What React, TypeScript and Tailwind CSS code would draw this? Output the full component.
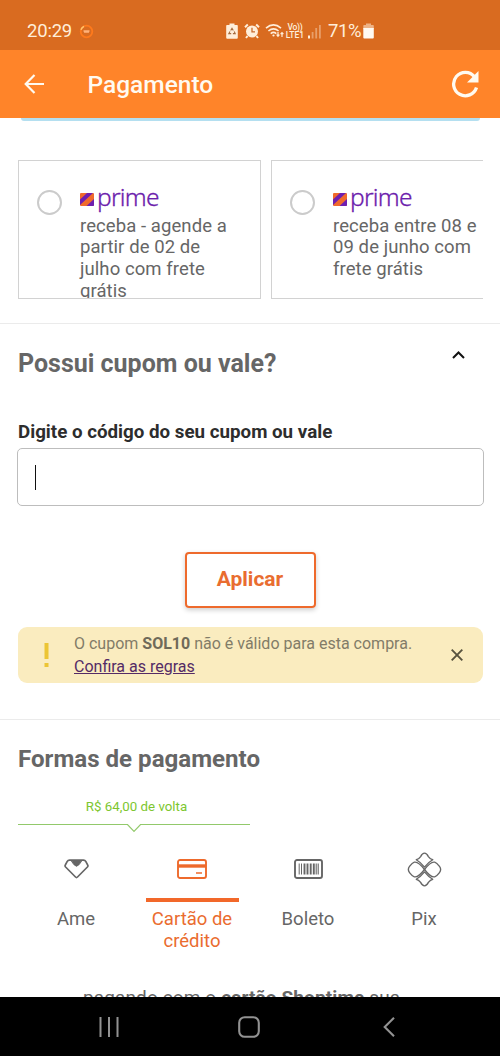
import type { ReactNode } from "react";

function StatusBar() {
  return (
    <div className="flex h-[50px] shrink-0 items-center bg-[#d96b20] pl-[27px] pt-[12px] text-[#ffeeda]">
      <span className="w-[52px] text-[18.5px] leading-[22px] tracking-[-0.2px]">20:29</span>
      <svg width="15" height="15" viewBox="0 0 15 15" fill="none">
        <circle cx="7.5" cy="7.5" r="5.8" stroke="#ff7a1c" strokeWidth="1.8" />
        <path d="M2 5.8A5.8 5.8 0 0 1 5 2.4" stroke="#ffc46b" strokeWidth="1.6" />
        <path d="M4.5 7h6M5 8.200h5" stroke="#ffb27a" strokeWidth="1.3" />
      </svg>
      <svg className="ml-[132px]" width="12" height="16" viewBox="0 0 12 16">
        <path d="M3.5 0.5h5v1.5H11a.8.8 0 0 1 .8.8v12a1 1 0 0 1-1 1H1.2a1 1 0 0 1-1-1v-12A.8.8 0 0 1 1 2h2.500z" fill="currentColor" />
        <path d="M4.700 7.500L6 5.300l1.300 2.200M8.200 8.600l1 2H6.900M5.200 10.600H2.800l1.200-2.200" stroke="#a66a3d" strokeWidth="1.100" fill="none" />
      </svg>
      <svg className="ml-[6px]" width="16" height="16" viewBox="0 0 16 16" fill="none">
        <circle cx="8" cy="8.500" r="6" fill="currentColor" />
        <path d="M1 4.200L3.800 1.500M15 4.200L12.200 1.500M3.500 13L2 15M12.500 13L14 15" stroke="currentColor" strokeWidth="2" />
        <path d="M8 4.800v4h3" stroke="#c96a2c" strokeWidth="1.300" />
      </svg>
      <svg className="ml-[5px]" width="20" height="16" viewBox="0 0 20 16" fill="none" stroke="currentColor">
        <path d="M1 5.200Q8.500-1.300 16 5.200M3.400 8Q8.500 3.700 13.600 8M5.700 10.600Q8.500 8.300 11.300 10.600" strokeWidth="1.600" />
        <circle cx="8.500" cy="12.500" r="1.100" fill="currentColor" stroke="none" />
        <path d="M13 9v4M11.600 11.700L13 13.300l1.400-1.600M17 14v-4M15.600 11.200L17 9.600l1.400 1.600" strokeWidth="1.200" />
      </svg>
      <div className="flex w-[20px] flex-col items-center text-[8.500px] font-medium leading-[8px]">
        <span className="tracking-[-0.3px]">Vo))</span>
        <span>LTE1</span>
      </div>
      <svg className="ml-[3px]" width="13" height="15" viewBox="0 0 13 15" fill="currentColor">
        <rect x="0" y="11.500" width="2" height="3" />
        <rect x="3.700" y="8" width="1.800" height="6.500" opacity=".4" />
        <rect x="7.300" y="4" width="1.800" height="10.500" opacity=".4" />
        <rect x="11" y="1" width="1.800" height="13.500" opacity=".4" />
      </svg>
      <span className="ml-[7px] w-[34px] text-[18.500px] leading-[22px] tracking-[-0.4px]">71%</span>
      <svg className="ml-[1px]" width="11" height="16" viewBox="0 0 11 16" fill="currentColor">
        <path d="M3 0.500h5V2h2a.8.8 0 0 1 .8.8V6H.3V2.800A.8.8 0 0 1 1 2h2z" opacity=".55" />
        <path d="M.3 5h10.500v9.500a1 1 0 0 1-1 1H1.300a1 1 0 0 1-1-1z" fill="#fffaf2" />
      </svg>
    </div>
  );
}

function Header() {
  return (
    <header className="flex h-[68px] shrink-0 items-center bg-[#ff8429] pl-[24px] pr-[21px] text-[#fffaf0]">
      <svg width="21" height="20" viewBox="0 0 21 20" fill="none" stroke="currentColor" strokeWidth="2.200">
        <path d="M20 10H2M10.500 1L1.700 10l8.800 9" />
      </svg>
      <h1 className="ml-[42.500px] flex-1 text-[24.500px] font-medium leading-[28px] pt-[2px]">Pagamento</h1>
      <svg width="28" height="28" viewBox="0 0 28 28" fill="none">
        <path d="M25.500 17.500A11.700 11.700 0 1 1 23.500 6.800" stroke="currentColor" strokeWidth="3.300" />
        <path d="M27.500 1v11.500H16z" fill="currentColor" />
      </svg>
    </header>
  );
}

function PrimeLogo({ id }: { id: string }) {
  return (
    <div className="flex h-[26px] items-center">
      <svg width="14" height="13" viewBox="0 0 14 13">
        <clipPath id={id}>
          <rect width="14" height="13" rx="1" />
        </clipPath>
        <g clipPath={`url(#${id})`}>
          <rect width="14" height="13" fill="#f06a2c" />
          <path d="M7 0h6L0 12V6.500zM14 6v7H6.500z" fill="#6e1fb0" />
        </g>
      </svg>
      <span className="-mt-[4px] ml-[3px] font-['Noto_Sans'] text-[24.500px] font-light leading-[26px] tracking-[-0.750px] text-[#6b20ac] [-webkit-text-stroke:0.3px_#6b20ac]">prime</span>
    </div>
  );
}

function ShippingCard({ id, lines, className }: { id: string; lines: string[]; className: string }) {
  return (
    <div className={`flex h-[139px] shrink-0 overflow-hidden border border-[#d2d2d2] pl-[18px] ${className}`}>
      <span className="mt-[29px] size-[25px] shrink-0 rounded-full border-2 border-[#cbcbcb]" />
      <div className="ml-[18px] mt-[25px] whitespace-nowrap text-[18.500px] leading-[21.700px] tracking-[0.080px] text-[#666]">
        <PrimeLogo id={id} />
        <div className="mt-[3.500px]">
          {lines.map((line) => (
            <div key={line}>{line}</div>
          ))}
        </div>
      </div>
    </div>
  );
}

function CouponAlert() {
  return (
    <div className="ml-[18px] mr-[17px] mt-[19px] flex h-[56px] shrink-0 items-center rounded-[9px] bg-[#faecbf]">
      <svg className="ml-[26px]" width="5" height="25" viewBox="0 0 5 25" fill="#ecc535">
        <rect x="0.500" y="0" width="4" height="16" />
        <rect x="0.500" y="20" width="4" height="4" />
      </svg>
      <div className="-mt-[1px] ml-[25px] flex-1 whitespace-nowrap text-[16px] leading-[23px] text-[#827c68]">
        <p>
          O cupom <b className="text-[#6f6a59]">SOL10</b> não é válido para esta compra.
        </p>
        <a className="text-[#542b66] underline">Confira as regras</a>
      </div>
      <svg className="mr-[20px]" width="12" height="12" viewBox="0 0 12 12" stroke="#57523e" strokeWidth="1.900">
        <path d="M.7.7l10.600 10.600M11.300.7L.7 11.300" />
      </svg>
    </div>
  );
}

function AmeIcon() {
  return (
    <svg width="25" height="20" viewBox="0 0 25 20" fill="none" stroke="#666" strokeWidth="1.700" strokeLinejoin="round">
      <path d="M5.500 1.200h14Q21 1.200 22 2.800L23.700 6Q24.300 7 23.400 8L13.500 18Q12.500 19 11.500 18L1.600 8Q.7 7 1.300 6L3 2.800Q4 1.200 5.500 1.200z" />
      <path d="M7.500 1.500h10L15.200 5.500l-2.700 1.800-2.700-1.800z" fill="#666" stroke="none" />
      <path d="M7 1.500l2.800 4 2.700 1.800 2.700-1.800 2.800-4" strokeWidth="1" />
    </svg>
  );
}

function CardIcon() {
  return (
    <svg width="30" height="20" viewBox="0 0 30 20" fill="none" stroke="#ee6a2c">
      <rect x="1" y="1" width="28" height="18" rx="2" strokeWidth="1.900" />
      <path d="M1 7h28" strokeWidth="3.400" />
      <path d="M19 14h6" strokeWidth="1.500" />
    </svg>
  );
}

function BoletoIcon() {
  return (
    <svg width="29" height="20" viewBox="0 0 29 20" fill="none" stroke="#666">
      <rect x="1" y="1" width="27" height="18" rx="2" strokeWidth="1.900" />
      <path d="M5.200 4.500v11M7.500 4.500v11" strokeWidth="1" />
      <path d="M10.500 4.500v11M13.500 4.500v11M16.700 4.500v11M19.800 4.500v11" strokeWidth="1.900" />
      <path d="M22.200 4.500v11M24.200 4.500v11" strokeWidth="1.100" />
    </svg>
  );
}

function PixIcon() {
  return (
    <svg width="35" height="35" viewBox="0 0 36 36" fill="none" stroke="#666" strokeWidth="1.400" strokeLinejoin="round">
      <path d="M9.500 8Q12 7.500 14 4.700Q15.800 1.200 18 1.200T22 4.700Q24 7.500 26.500 8Q22 10.500 18 15.500Q14 10.500 9.500 8z" />
      <path d="M9.500 28Q12 28.500 14 31.300Q15.800 34.800 18 34.800T22 31.300Q24 28.500 26.500 28Q22 25.500 18 20.500Q14 25.500 9.500 28z" />
      <path d="M18 18Q11.500 9.500 7.500 10.500Q5.500 11 2.600 14.800Q.2 18 2.600 21.200Q5.500 25 7.500 25.500Q11.500 26.500 18 18z" />
      <path d="M18 18Q24.500 9.500 28.500 10.500Q30.500 11 33.400 14.800Q35.800 18 33.400 21.200Q30.500 25 28.500 25.500Q24.500 26.500 18 18z" />
    </svg>
  );
}

function PaymentTab({ icon, label, active = false }: { icon: ReactNode; label: ReactNode; active?: boolean }) {
  return (
    <div className="flex flex-1 flex-col items-center">
      <div className="flex h-[36px] items-center">{icon}</div>
      <div className={`mt-[11px] h-[4px] w-[93px] ${active ? "bg-[#f2682a]" : "bg-transparent"}`} />
      <div className={`mt-[6px] text-center text-[18.500px] leading-[22px] ${active ? "text-[#ea6c2f]" : "text-[#666]"}`}>{label}</div>
    </div>
  );
}

function NavigationBar() {
  return (
    <nav className="flex h-[59px] shrink-0 items-center bg-black pl-[99px] text-[#929292]">
      <svg width="20" height="20" viewBox="0 0 20 20" fill="none" stroke="currentColor" strokeWidth="2">
        <path d="M1.500 0v20M10 0v20M18.500 0v20" />
      </svg>
      <svg className="ml-[119px]" width="22" height="22" viewBox="0 0 22 22" fill="none" stroke="currentColor" strokeWidth="2.100">
        <rect x="1.200" y="1.200" width="19.600" height="19.600" rx="5.500" />
      </svg>
      <svg className="ml-[123px]" width="12" height="20" viewBox="0 0 12 20" fill="none" stroke="currentColor" strokeWidth="2.100">
        <path d="M11 .8L1.700 10l9.300 9.200" />
      </svg>
    </nav>
  );
}

export default function App() {
  return (
    <div className="flex h-[1056px] w-[500px] flex-col overflow-hidden bg-white font-[Roboto,sans-serif]">
      <StatusBar />
      <Header />
      <main className="flex min-h-0 flex-1 flex-col overflow-hidden">
        <div className="ml-[21px] mr-[20px] h-[3px] shrink-0 rounded-b-[6px] bg-[#b4dff0]" />
        <div className="ml-[18px] mr-[17px] mt-[39px] flex shrink-0 gap-[10px] overflow-hidden">
          <ShippingCard id="prime-a" className="w-[243px]" lines={["receba - agende a", "partir de 02 de", "julho com frete", "grátis"]} />
          <ShippingCard id="prime-b" className="w-[243px]" lines={["receba entre 08 e", "09 de junho com", "frete grátis"]} />
        </div>
        <hr className="mt-[24px] shrink-0 border-t-[1.500px] border-[#ebebeb]" />
        <div className="flex h-[54px] shrink-0 justify-between pl-[18px] pr-[35px] pt-[24px]">
          <h2 className="mt-[1px] text-[25px] font-bold leading-[30px] text-[#666]">Possui cupom ou vale?</h2>
          <svg className="mt-[3px]" width="13" height="8" viewBox="0 0 13 8" fill="none" stroke="#111" strokeWidth="2">
            <path d="M1 7l5.500-5.500L12 7" />
          </svg>
        </div>
        <label className="ml-[18px] mt-[43px] shrink-0 text-[18.750px] font-bold leading-[22px] text-[#2d2d2d]">Digite o código do seu cupom ou vale</label>
        <div className="ml-[17px] mr-[16px] mt-[5px] flex h-[58px] shrink-0 items-center rounded-[5px] border border-[#bdbdbd] pl-[17px]">
          <span className="h-[25px] w-px bg-[#111]" />
        </div>
        <button className="mt-[46px] h-[56px] w-[131px] shrink-0 self-center rounded-[4px] border-2 border-[#ee6a2c] text-[21px] font-bold text-[#e96d30] shadow-[0_2px_5px_rgba(0,0,0,0.2)]">Aplicar</button>
        <CouponAlert />
        <hr className="mt-[36px] shrink-0 border-t-[1.500px] border-[#ebebeb]" />
        <h2 className="ml-[18px] mt-[24px] shrink-0 text-[24.100px] font-bold leading-[30px] text-[#666]">Formas de pagamento</h2>
        <div className="ml-[18px] mt-[25px] w-[232px] shrink-0">
          <p className="pl-[5px] text-center text-[13.300px] leading-[16px] text-[#7dc62f]">R$ 64,00 de volta</p>
          <svg className="mt-[8px] block" width="232" height="10" viewBox="0 0 232 10" fill="none" stroke="#92c96b" strokeWidth="1.200">
            <path d="M0 1.500h109.500l6.500 6.800 6.500-6.800H232" />
          </svg>
        </div>
        <div className="ml-[18px] mt-[18px] flex w-[464px] shrink-0">
          <PaymentTab icon={<AmeIcon />} label="Ame" />
          <PaymentTab icon={<CardIcon />} label={<>Cartão de<br />crédito</>} active />
          <PaymentTab icon={<BoletoIcon />} label="Boleto" />
          <PaymentTab icon={<PixIcon />} label="Pix" />
        </div>
        <p className="ml-[83px] mt-[35px] shrink-0 whitespace-nowrap text-[19px] leading-[22px] tracking-[0.120px] text-[#666]">
          pagando com o <b>cartão Shoptime</b> sua
        </p>
      </main>
      <NavigationBar />
    </div>
  );
}
